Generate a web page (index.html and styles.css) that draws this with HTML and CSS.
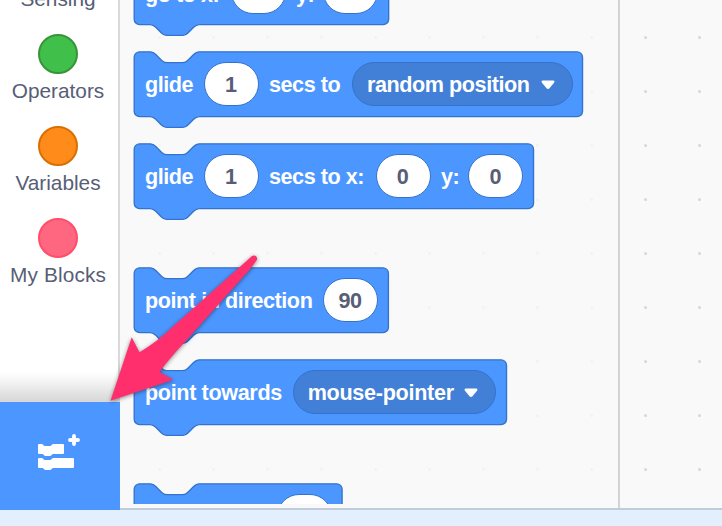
FILE: index.html
```html
<!DOCTYPE html>
<html lang="en">
<head>
<meta charset="utf-8">
<title>Block editor</title>
<link rel="stylesheet" href="styles.css">
</head>
<body>
<div class="editor">
  <nav class="sidebar">
    <ul class="categories">
      <li class="category"><i class="dot sensing"></i><span>Sensing</span></li>
      <li class="category"><i class="dot operators"></i><span>Operators</span></li>
      <li class="category"><i class="dot variables"></i><span>Variables</span></li>
      <li class="category"><i class="dot my-blocks"></i><span class="wide">My Blocks</span></li>
    </ul>
    <div class="fade"></div>
    <button class="add-extension" aria-label="Add Extension">
      <svg width="44" height="36" viewBox="0 0 44 36">
        <g fill="#fff">
          <path d="M1,10h3c1,0 1.500,2 3,2h5c1.500,0 2,-2 3,-2h10a1,1 0 0,1 1,1v8a1,1 0 0,1 -1,1H15c-1,0 -1.500,2 -3,2H7.500c-1.500,0 -2,-2 -3,-2H1a1,1 0 0,1 -1,-1v-8a1,1 0 0,1 1,-1z"/>
          <path d="M1,24h3c1,0 1.500,2 3,2h5c1.500,0 2,-2 3,-2h20a1,1 0 0,1 1,1v8a1,1 0 0,1 -1,1H15c-1,0 -1.500,2 -3,2H7.500c-1.500,0 -2,-2 -3,-2H1a1,1 0 0,1 -1,-1v-8a1,1 0 0,1 1,-1z"/>
        </g>
        <path d="M36,2v8M32,6h8" stroke="#fff" stroke-width="3.800" stroke-linecap="round"/>
      </svg>
    </button>
  </nav>
  <main class="canvas">
    <section class="flyout">
      <div class="palette">
        <div class="block">
          <svg class="shape" width="257" height="78"><g transform="translate(1.200 .8) scale(1.350)"><path d="M60,0H184.500a4,4 0 0,1 4,4v40a4,4 0 0,1 -4,4H48c-2,0 -3,1 -4,2l-4,4c-1,1 -2,2 -4,2h-12c-2,0 -3,-1 -4,-2l-4,-4c-1,-1 -2,-2 -4,-2H4a4,4 0 0,1 -4,-4V4a4,4 0 0,1 4,-4H12c2,0 3,1 4,2l4,4c1,1 2,2 4,2h12c2,0 3,-1 4,-2l4,-4c1,-1 2,-2 4,-2z"/></g></svg>
          <div class="row"><span class="label goto">go to x:</span><span class="num">0</span><span class="label y">y:</span><span class="num">0</span></div>
        </div>
        <div class="block">
          <svg class="shape" width="451" height="78"><g transform="translate(1.200 .8) scale(1.350)"><path d="M60,0H328.100a4,4 0 0,1 4,4v40a4,4 0 0,1 -4,4H48c-2,0 -3,1 -4,2l-4,4c-1,1 -2,2 -4,2h-12c-2,0 -3,-1 -4,-2l-4,-4c-1,-1 -2,-2 -4,-2H4a4,4 0 0,1 -4,-4V4a4,4 0 0,1 4,-4H12c2,0 3,1 4,2l4,4c1,1 2,2 4,2h12c2,0 3,-1 4,-2l4,-4c1,-1 2,-2 4,-2z"/></g></svg>
          <div class="row"><span class="label glide">glide</span><span class="num">1</span><span class="label secs">secs to</span><span class="menu random"><span>random position</span><svg width="14" height="10" viewBox="0 0 14 10"><path d="M2,.5H12Q14.300,.8 13,2.800L8.500,8.300Q7,9.800 5.500,8.300L1,2.800Q-.3,.8 2,.5z" fill="#fff"/></svg></span></div>
        </div>
        <div class="block">
          <svg class="shape" width="402" height="78"><g transform="translate(1.200 .8) scale(1.350)"><path d="M60,0H291.800a4,4 0 0,1 4,4v40a4,4 0 0,1 -4,4H48c-2,0 -3,1 -4,2l-4,4c-1,1 -2,2 -4,2h-12c-2,0 -3,-1 -4,-2l-4,-4c-1,-1 -2,-2 -4,-2H4a4,4 0 0,1 -4,-4V4a4,4 0 0,1 4,-4H12c2,0 3,1 4,2l4,4c1,1 2,2 4,2h12c2,0 3,-1 4,-2l4,-4c1,-1 2,-2 4,-2z"/></g></svg>
          <div class="row"><span class="label glide">glide</span><span class="num">1</span><span class="label secs-x">secs to x:</span><span class="num">0</span><span class="label y">y:</span><span class="num">0</span></div>
        </div>
        <div class="block group-start">
          <svg class="shape" width="257" height="78"><g transform="translate(1.200 .8) scale(1.350)"><path d="M60,0H184.300a4,4 0 0,1 4,4v40a4,4 0 0,1 -4,4H48c-2,0 -3,1 -4,2l-4,4c-1,1 -2,2 -4,2h-12c-2,0 -3,-1 -4,-2l-4,-4c-1,-1 -2,-2 -4,-2H4a4,4 0 0,1 -4,-4V4a4,4 0 0,1 4,-4H12c2,0 3,1 4,2l4,4c1,1 2,2 4,2h12c2,0 3,-1 4,-2l4,-4c1,-1 2,-2 4,-2z"/></g></svg>
          <div class="row"><span class="label direction">point in direction</span><span class="num">90</span></div>
        </div>
        <div class="block">
          <svg class="shape" width="375" height="78"><g transform="translate(1.200 .8) scale(1.350)"><path d="M60,0H271.800a4,4 0 0,1 4,4v40a4,4 0 0,1 -4,4H48c-2,0 -3,1 -4,2l-4,4c-1,1 -2,2 -4,2h-12c-2,0 -3,-1 -4,-2l-4,-4c-1,-1 -2,-2 -4,-2H4a4,4 0 0,1 -4,-4V4a4,4 0 0,1 4,-4H12c2,0 3,1 4,2l4,4c1,1 2,2 4,2h12c2,0 3,-1 4,-2l4,-4c1,-1 2,-2 4,-2z"/></g></svg>
          <div class="row"><span class="label towards">point towards</span><span class="menu pointer"><span>mouse-pointer</span><svg width="14" height="10" viewBox="0 0 14 10"><path d="M2,.5H12Q14.300,.8 13,2.800L8.500,8.300Q7,9.800 5.500,8.300L1,2.800Q-.3,.8 2,.5z" fill="#fff"/></svg></span></div>
        </div>
        <div class="block group-start">
          <svg class="shape" width="211" height="78"><g transform="translate(1.200 .8) scale(1.350)"><path d="M60,0H150a4,4 0 0,1 4,4v40a4,4 0 0,1 -4,4H48c-2,0 -3,1 -4,2l-4,4c-1,1 -2,2 -4,2h-12c-2,0 -3,-1 -4,-2l-4,-4c-1,-1 -2,-2 -4,-2H4a4,4 0 0,1 -4,-4V4a4,4 0 0,1 4,-4H12c2,0 3,1 4,2l4,4c1,1 2,2 4,2h12c2,0 3,-1 4,-2l4,-4c1,-1 2,-2 4,-2z"/></g></svg>
          <div class="row"><span class="label last"></span><span class="num"></span></div>
        </div>
      </div>
    </section>
    <section class="workspace"></section>
  </main>
</div>
<svg class="arrow" width="170" height="170" viewBox="100 245 170 170">
  <path d="M110.500,400.700L131.700,337.300L139.500,352.200Q157,342 173,326.500L251.800,256.300C254.500,253.800 258.500,256.800 256.600,260.300Q253,266 248,271.500L184,343Q169,359 159.500,372L173.300,379.700z" fill="#ff2f6e"/>
</svg>
</body>
</html>
```
FILE: styles.css
```css
* { box-sizing: border-box; }

body {
  margin: 0;
  width: 722px;
  height: 526px;
  overflow: hidden;
  background: #e3effd;
  font-family: "Liberation Sans", Arial, sans-serif;
}

.editor { display: flex; height: 510px; }

/* Category sidebar */
.sidebar {
  display: flex;
  flex-direction: column;
  width: 120px;
  height: 510px;
  background: #fff;
}

.categories {
  flex: none;
  height: 370px;
  margin: 0;
  padding: 0 2px 0 0;
  border-right: 2px solid #d9d9d9;
  overflow: hidden;
  list-style: none;
}

.category {
  display: flex;
  flex-direction: column;
  align-items: center;
  gap: 5px;
  height: 92px;
  color: #575e75;
  font-size: 20.8px;
  line-height: 24px;
  white-space: nowrap;
}

.category:first-child { margin-top: -58px; }
.wide { letter-spacing: .15px; }

.dot {
  width: 40px;
  height: 40px;
  border: 2px solid;
  border-radius: 50%;
}

.sensing { background: #5cb1d6; border-color: #2e8eb8; }
.operators { background: #40bf4a; border-color: #389438; }
.variables { background: #ff8c1a; border-color: #db6e00; }
.my-blocks { background: #ff6680; border-color: #ff4d6a; }

.fade {
  height: 32px;
  border-right: 2px solid #d9d9d9;
  background: linear-gradient(#fff 5%, #f4f4f4 35%, #d6d6d6);
}

.add-extension {
  flex: 1;
  display: flex;
  padding: 32px 0 0 38px;
  border: 0;
  background: #4c97ff;
}

/* Canvas: the dot grid runs under both the flyout and the workspace */
.canvas {
  display: flex;
  flex: 1;
  border-bottom: 2px solid #c0ccda;
  background: radial-gradient(circle at 27.600px 27.600px, #d8d8d8 1px, transparent 1.900px) -42px 10px / 54px 54px #f9f9f9;
}

.flyout {
  width: 500px;
  height: 508px;
  padding-left: 13px;
  border-right: 2px solid #d3d3d3;
  background: rgba(249, 249, 249, .8);
}

.palette { height: 504px; overflow: hidden; }

.workspace { flex: 1; }

.block { display: grid; height: 92px; }
.block:first-child { margin-top: -41px; }
.block:first-child .label { padding-top: 5px; }
.group-start { margin-top: 32px; }

.shape, .row { grid-area: 1 / 1; }
.shape { display: block; fill: #4c97ff; stroke: #3373cc; }

.row {
  display: flex;
  align-items: center;
  gap: 10.8px;
  height: 66px;
  padding-left: 12px;
  color: #fff;
  font-size: 21.6px;
  font-weight: bold;
  letter-spacing: -.45px;
  line-height: 24px;
  white-space: nowrap;
}

.label { flex: none; padding-top: 2px; }
.goto { width: 75.4px; }
.glide { width: 48.4px; }
.secs { width: 72.3px; }
.secs-x { width: 96.3px; }
.y { width: 17px; }
.direction { width: 167.8px; letter-spacing: -.43px; }
.towards { width: 136.9px; letter-spacing: -.36px; }
.last { width: 121.5px; }

.num {
  display: flex;
  flex: none;
  align-items: center;
  justify-content: center;
  width: 55px;
  height: 44px;
  margin: 0 -.5px;
  padding: 2px 1px 0 0;
  border: 1px solid #3373cc;
  border-radius: 22px;
  background: #fff;
  color: #575e75;
}

.menu {
  display: flex;
  flex: none;
  align-items: center;
  justify-content: space-between;
  height: 44px;
  padding: 2px 17px 0 14px;
  border: 1px solid #3373cc;
  border-radius: 22px;
  background: #4280d7;
}

.random { width: 220.5px; }
.pointer { width: 203.5px; letter-spacing: -.3px; }

/* Annotation arrow over the page */
.arrow {
  position: absolute;
  left: 100px;
  top: 245px;
  filter: drop-shadow(0 1px 2px rgba(0, 0, 0, .45));
}
```
